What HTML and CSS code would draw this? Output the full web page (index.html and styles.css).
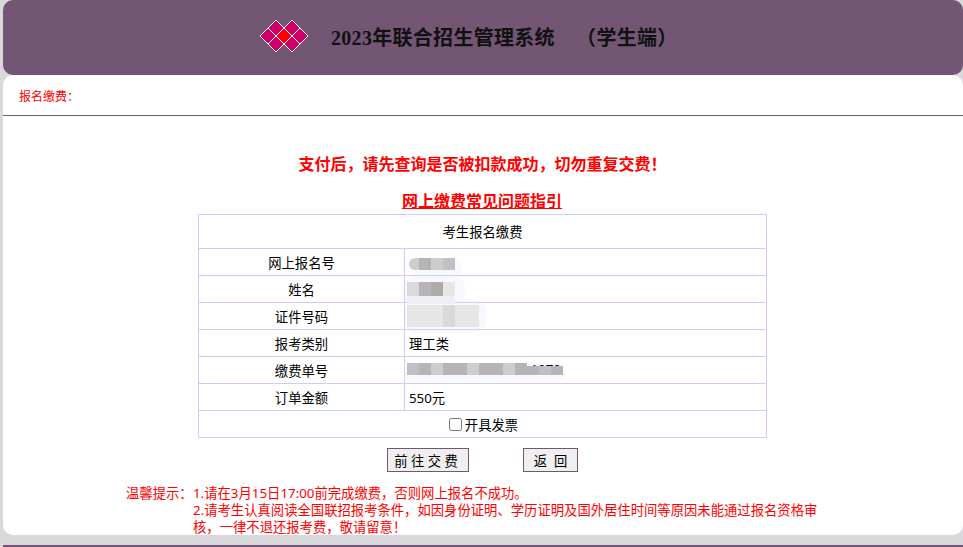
FILE: index.html
```html
<!DOCTYPE html>
<html lang="zh-CN">
<head>
    <meta charset="UTF-8">
    <title>2023年联合招生管理系统</title>
    <link rel="stylesheet" href="styles.css">
</head>
<body>
    <header class="top">
        <svg class="logo" width="48" height="34" viewBox="0 0 48 34">
            <g stroke="#fff" stroke-width="1" fill="#cc0066">
                <path d="M16 1l8 8-8 8-8-8z"/>
                <path d="M32 1l8 8-8 8-8-8z"/>
                <path d="M8 9l8 8-8 8-8-8z"/>
                <path d="M40 9l8 8-8 8-8-8z"/>
                <path d="M16 17l8 8-8 8-8-8z"/>
                <path d="M32 17l8 8-8 8-8-8z"/>
                <path d="M24 9l8 8-8 8-8-8z" fill="#ff0000"/>
            </g>
        </svg>
        <h1 class="title">2023年联合招生管理系统 &nbsp; &nbsp;（学生端）</h1>
    </header>

    <main class="panel">
        <div class="crumb">报名缴费：</div>

        <h2 class="notice">支付后，请先查询是否被扣款成功，切勿重复交费！</h2>
        <a class="guide" href="#">网上缴费常见问题指引</a>

        <table class="pay">
            <colgroup>
                <col class="col-label">
                <col>
            </colgroup>
            <tr class="head"><td colspan="2">考生报名缴费</td></tr>
            <tr>
                <td class="label">网上报名号</td>
                <td class="value">
                    <span class="mosaic m-id">
                        <i class="g3"></i><i class="g5"></i><i class="g3"></i><i class="g4"></i>
                    </span>
                </td>
            </tr>
            <tr>
                <td class="label">姓名</td>
                <td class="value">
                    <span class="mosaic m-name">
                        <i class="g2"></i><i class="g5"></i><i class="g6"></i><i class="g1"></i>
                    </span>
                </td>
            </tr>
            <tr>
                <td class="label">证件号码</td>
                <td class="value">
                    <span class="mosaic m-card">
                        <i class="g1"></i><i class="g1"></i><i class="g1"></i><i class="g2"></i><i class="g1"></i><i class="g1"></i>
                    </span>
                </td>
            </tr>
            <tr>
                <td class="label">报考类别</td>
                <td class="value">理工类</td>
            </tr>
            <tr>
                <td class="label">缴费单号</td>
                <td class="value">
                    <span class="mosaic m-order">
                        <span class="digits">1979</span>
                        <i class="g4"></i><i class="g5"></i><i class="g3"></i><i class="g5"></i><i class="g5"></i><i class="g3"></i><i class="g5"></i><i class="g5"></i><i class="g3"></i><i class="g5"></i><i class="g5"></i><i class="g4"></i><i class="g5"></i>
                    </span>
                </td>
            </tr>
            <tr>
                <td class="label">订单金额</td>
                <td class="value">550元</td>
            </tr>
            <tr>
                <td colspan="2" class="invoice"><label><input type="checkbox">开具发票</label></td>
            </tr>
        </table>

        <div class="actions">
            <button class="btn">前 往 交 费</button>
            <button class="btn">返  回</button>
        </div>

        <div class="tips">
            <span class="tips-label">温馨提示：</span>
            <p class="tips-text">1.请在3月15日17:00前完成缴费，否则网上报名不成功。<br>2.请考生认真阅读全国联招报考条件，如因身份证明、学历证明及国外居住时间等原因未能通过报名资格审核，一律不退还报考费，敬请留意！</p>
        </div>
    </main>

    <div class="bottom"></div>
</body>
</html>
```

FILE: styles.css
```css
html {
    height: 547px;
    overflow: hidden;
}

body {
    margin: 0;
    padding-left: 3px;
    background-color: #d9d9db;
    font-family: "Noto Sans", "Noto Sans CJK SC", sans-serif;
    font-size: 13.33px;
    color: #000;
}

.top {
    display: flex;
    align-items: center;
    height: 75px;
    padding-left: 257px;
    background-color: #725674;
    border-radius: 10px;
    box-sizing: border-box;
}

.logo {
    display: block;
    margin-top: -3px;
}

.title {
    margin: -2px 0 0 23px;
    font-family: "Liberation Serif", "Noto Sans CJK SC", serif;
    font-size: 20px;
    font-weight: bold;
    letter-spacing: 0.3px;
    color: #111;
    white-space: nowrap;
}

.panel {
    height: 460px;
    background-color: #fff;
    border-radius: 10px;
    overflow: hidden;
}

.crumb {
    height: 40px;
    line-height: 43px;
    padding-left: 16px;
    font-size: 12px;
    color: #ff0000;
    border-bottom: 1px solid #725674;
}

.notice {
    margin: 36px 0 0;
    padding-right: 1px;
    height: 24px;
    line-height: 24px;
    text-align: center;
    font-size: 16px;
    font-weight: bold;
    color: #ff0000;
}

.guide {
    display: block;
    width: 160px;
    margin: 13px 0 0 399px;
    height: 25px;
    line-height: 24px;
    font-size: 16px;
    font-weight: bold;
    color: #ff0000;
    text-decoration: underline;
}

.pay {
    width: 569px;
    margin: 0 0 0 195px;
    border-collapse: collapse;
    table-layout: fixed;
}

.col-label {
    width: 206px;
}

.pay td {
    height: 26px;
    padding: 0;
    border: 1px solid #ccccff;
}

.pay .head td {
    height: 33px;
    text-align: center;
}

.pay .label {
    text-align: center;
}

.pay .value {
    padding-left: 4px;
}

.pay .invoice {
    padding: 1px 0 0 2px;
    height: 25px;
    text-align: center;
}

.invoice input {
    margin: 0 3px 0 0;
    vertical-align: -1px;
}

/* blurred out personal data */
.mosaic {
    display: flex;
    width: max-content;
    background-color: #f8f8ff;
    border-radius: 8px;
}

.mosaic i {
    display: block;
    position: relative;
    width: 12px;
    height: 12px;
}

.m-id {
    margin-top: 3px;
    box-shadow: 6px 4px 0 2px #f8f8ff;
}

.m-id i:first-child {
    width: 10px;
    border-radius: 6px 0 0 6px;
}

.m-name {
    margin: 0 0 0 -2px;
    box-shadow: 3px 2px 0 8px #f8f8ff;
}

.m-name i {
    height: 14px;
    box-shadow: 0 8px 0 #eeeef3;
}

.m-card {
    margin-left: -2px;
    box-shadow: 2px 0 0 6px #f8f8ff;
    border-radius: 10px;
}

.m-card i {
    height: 22px;
}

.m-order {
    position: relative;
    margin: -2px 0 0 -2px;
    box-shadow: 0 5px 0 2px #f8f8ff;
}

.digits {
    position: absolute;
    right: 2px;
    top: -3px;
    line-height: 18px;
}

.m-order i:nth-last-child(-n+3) {
    height: 9px;
    margin-top: 3px;
}

.g1 { background-color: #e6e6e6; }
.g2 { background-color: #dadada; }
.g3 { background-color: #cdcdcd; }
.g4 { background-color: #c0c0c4; }
.g5 { background-color: #b6b4b4; }
.g6 { background-color: #aeaaaa; }

.actions {
    display: flex;
    gap: 54px;
    margin: 10px 0 0 384px;
}

.btn {
    height: 24px;
    padding: 0;
    background-color: #efefef;
    border: 1px solid #725674;
    font-family: inherit;
    font-size: 13.33px;
    color: #000;
    white-space: pre;
}

.btn:first-child {
    width: 82px;
    padding-right: 4px;
}

.btn:last-child {
    width: 55px;
}

.tips {
    display: flex;
    margin: 13px 0 0 123px;
    line-height: 17px;
    color: #ff0000;
}

.tips-label {
    width: 67px;
    flex: none;
}

.tips-text {
    width: 630px;
    margin: 0;
}

.bottom {
    height: 2px;
    margin-top: 10px;
    background-color: #725674;
}
```
